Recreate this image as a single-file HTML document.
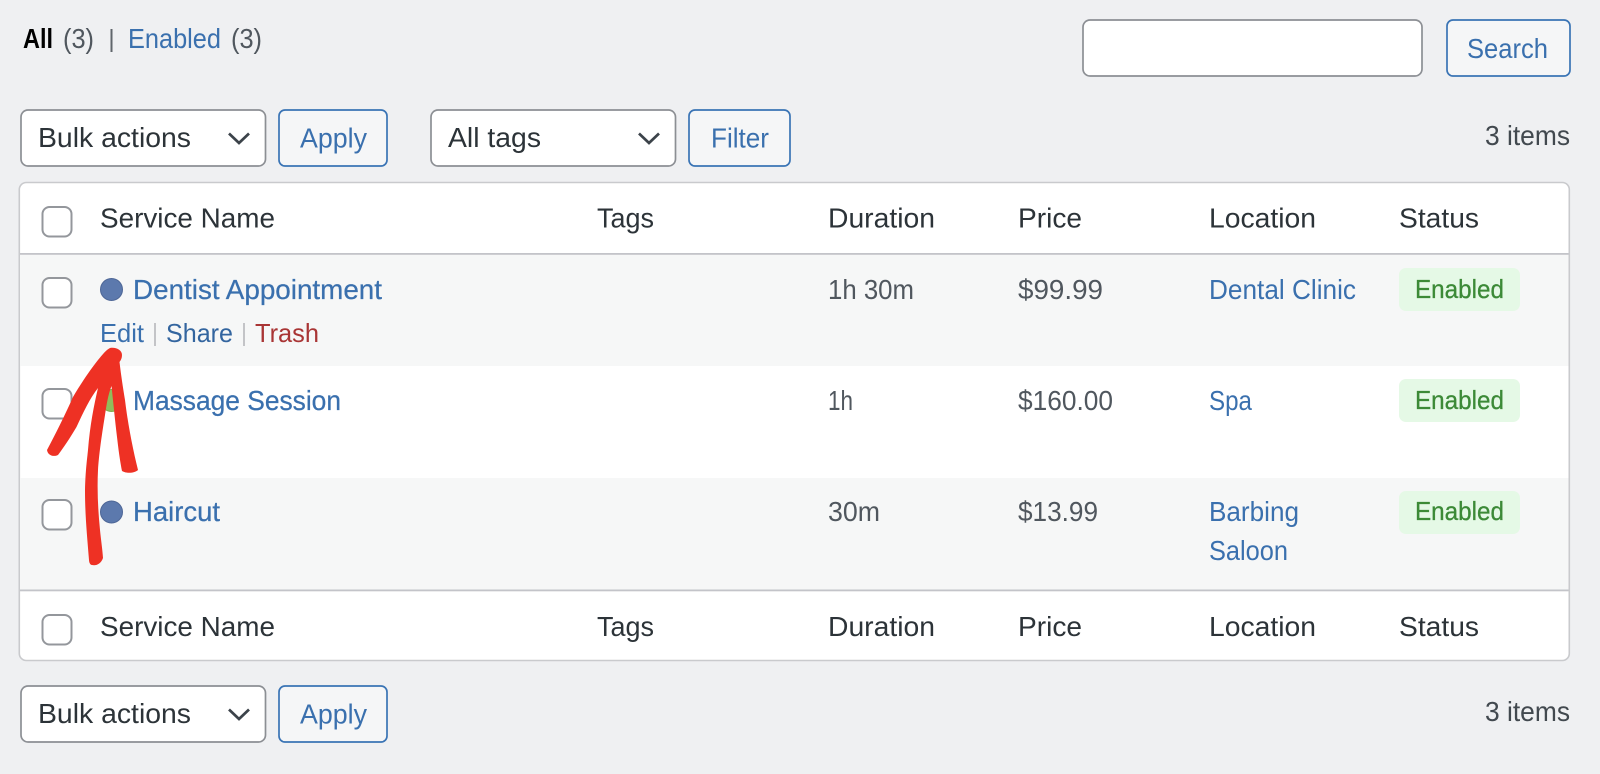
<!DOCTYPE html>
<html lang="en">
<head>
<meta charset="utf-8">
<title>Services</title>
<style>
html,body{margin:0;padding:0;background:#eff0f2;width:1600px;height:774px;overflow:hidden}
svg{display:block;filter:blur(.3px)}
text{font-family:"Liberation Sans",sans-serif;font-size:28px;fill:#2c3338}
.d{fill:#50575e}
.l{fill:#3a70ae}
.m{stroke:#3a70ae;stroke-width:.25}
.b{fill:#3a70ae}
.g{fill:#3c8a37;stroke:#3c8a37;stroke-width:.3;font-size:26px}
.cb{fill:#fff;stroke:#94979c;stroke-width:2}
.sel{fill:#fff;stroke:#8c8f94;stroke-width:1.7}
.btn{fill:#f5f6f7;stroke:#3a74b5;stroke-width:1.7}
.chev{fill:none;stroke:#3c434a;stroke-width:2.7}
.badge{fill:#e5f9e6}
</style>
</head>
<body>
<svg width="1600" height="774" viewBox="0 0 1600 774" xmlns="http://www.w3.org/2000/svg">
<rect x="-5" y="-5" width="1610" height="784" fill="#eff0f2"/>

<!-- views -->
<text x="23" y="48" textLength="30" lengthAdjust="spacingAndGlyphs" font-weight="700" style="fill:#000">All</text>
<text x="63" y="48" textLength="31" lengthAdjust="spacingAndGlyphs" class="d">(3)</text>
<rect x="110.5" y="29" width="2" height="23" fill="#60666c"/>
<text x="128" y="48" textLength="93" lengthAdjust="spacingAndGlyphs" class="l">Enabled</text>
<text x="231" y="48" textLength="31" lengthAdjust="spacingAndGlyphs" class="d">(3)</text>

<!-- search -->
<rect x="1083" y="20" width="339" height="56" rx="7" class="sel"/>
<rect x="1447" y="20" width="123" height="56" rx="6" class="btn"/>
<text x="1467" y="58" textLength="81" lengthAdjust="spacingAndGlyphs" class="b">Search</text>

<!-- top tablenav -->
<rect x="21" y="110" width="244.500" height="56" rx="7" class="sel"/>
<text x="38" y="147" textLength="153" lengthAdjust="spacingAndGlyphs">Bulk actions</text>
<path d="M229 133.500l10 9.500 10-9.500" class="chev"/>
<rect x="279" y="110" width="108" height="56" rx="6" class="btn"/>
<text x="300" y="147.500" textLength="67" lengthAdjust="spacingAndGlyphs" class="b">Apply</text>
<rect x="431" y="110" width="244.500" height="56" rx="7" class="sel"/>
<text x="448" y="147" textLength="93" lengthAdjust="spacingAndGlyphs">All tags</text>
<path d="M639 133.500l10 9.500 10-9.500" class="chev"/>
<rect x="689" y="110" width="101" height="56" rx="6" class="btn"/>
<text x="711" y="147.500" textLength="58" lengthAdjust="spacingAndGlyphs" class="b">Filter</text>
<text x="1485" y="145" textLength="85" lengthAdjust="spacingAndGlyphs" class="d" style="fill:#42494f">3 items</text>

<!-- table -->
<rect x="19.300" y="182.500" width="1550" height="478" rx="7" fill="#fff" stroke="#c9cacd" stroke-width="1.600"/>
<rect x="20" y="254" width="1548.500" height="112" fill="#f6f7f7"/>
<rect x="20" y="478" width="1548.500" height="112" fill="#f6f7f7"/>
<rect x="20" y="253" width="1548.500" height="1.800" fill="#c3c4c9"/>
<rect x="20" y="589.500" width="1548.500" height="1.800" fill="#c3c4c9"/>

<!-- header -->
<rect x="42.500" y="207" width="29" height="29.500" rx="7" class="cb"/>
<text x="100" y="227.500" textLength="175" lengthAdjust="spacingAndGlyphs">Service Name</text>
<text x="597" y="227.500" textLength="57" lengthAdjust="spacingAndGlyphs">Tags</text>
<text x="828" y="227.500" textLength="107" lengthAdjust="spacingAndGlyphs">Duration</text>
<text x="1018" y="227.500" textLength="64" lengthAdjust="spacingAndGlyphs">Price</text>
<text x="1209" y="227.500" textLength="107" lengthAdjust="spacingAndGlyphs">Location</text>
<text x="1399" y="227.500" textLength="80" lengthAdjust="spacingAndGlyphs">Status</text>

<!-- row 1 -->
<rect x="42.500" y="278" width="29" height="29.500" rx="7" class="cb"/>
<circle cx="111.500" cy="289.500" r="11" fill="#5c79ad" stroke="#4e6797" stroke-width="1"/>
<text x="133" y="299" textLength="249" lengthAdjust="spacingAndGlyphs" class="l m">Dentist Appointment</text>
<text x="100" y="342" textLength="44" lengthAdjust="spacingAndGlyphs" class="l" style="font-size:26px">Edit</text>
<rect x="154" y="323" width="2" height="23" fill="#c3c4c7"/>
<text x="166" y="342" textLength="67" lengthAdjust="spacingAndGlyphs" style="font-size:26px;fill:#33659f">Share</text>
<rect x="243" y="323" width="2" height="23" fill="#c3c4c7"/>
<text x="255" y="342" textLength="64" lengthAdjust="spacingAndGlyphs" style="font-size:26px;fill:#a93535">Trash</text>
<text x="828" y="299" textLength="86" lengthAdjust="spacingAndGlyphs" class="d">1h 30m</text>
<text x="1018" y="299" textLength="85" lengthAdjust="spacingAndGlyphs" class="d">$99.99</text>
<text x="1209" y="299" textLength="147" lengthAdjust="spacingAndGlyphs" class="l">Dental Clinic</text>
<rect x="1399" y="268" width="121" height="43" rx="7" class="badge"/>
<text x="1415" y="298" textLength="89" lengthAdjust="spacingAndGlyphs" class="g">Enabled</text>

<!-- row 2 -->
<rect x="42.500" y="389" width="29" height="29.500" rx="7" class="cb"/>
<circle cx="111.500" cy="400.500" r="11" fill="#90bd5c" stroke="#7fac4e" stroke-width="1"/>
<text x="133" y="410" textLength="208" lengthAdjust="spacingAndGlyphs" class="l m">Massage Session</text>
<text x="828" y="410" textLength="25" lengthAdjust="spacingAndGlyphs" class="d">1h</text>
<text x="1018" y="410" textLength="95" lengthAdjust="spacingAndGlyphs" class="d">$160.00</text>
<text x="1209" y="410" textLength="43" lengthAdjust="spacingAndGlyphs" class="l">Spa</text>
<rect x="1399" y="379" width="121" height="43" rx="7" class="badge"/>
<text x="1415" y="409" textLength="89" lengthAdjust="spacingAndGlyphs" class="g">Enabled</text>

<!-- row 3 -->
<rect x="42.500" y="500" width="29" height="29.500" rx="7" class="cb"/>
<circle cx="111.500" cy="512" r="11" fill="#5c79ad" stroke="#4e6797" stroke-width="1"/>
<text x="133" y="521" textLength="87" lengthAdjust="spacingAndGlyphs" class="l m">Haircut</text>
<text x="828" y="521" textLength="52" lengthAdjust="spacingAndGlyphs" class="d">30m</text>
<text x="1018" y="521" textLength="80" lengthAdjust="spacingAndGlyphs" class="d">$13.99</text>
<text x="1209" y="521" textLength="90" lengthAdjust="spacingAndGlyphs" class="l">Barbing</text>
<text x="1209" y="560" textLength="79" lengthAdjust="spacingAndGlyphs" class="l">Saloon</text>
<rect x="1399" y="491" width="121" height="43" rx="7" class="badge"/>
<text x="1415" y="520" textLength="89" lengthAdjust="spacingAndGlyphs" class="g">Enabled</text>

<!-- footer -->
<rect x="42.500" y="615" width="29" height="29.500" rx="7" class="cb"/>
<text x="100" y="636" textLength="175" lengthAdjust="spacingAndGlyphs">Service Name</text>
<text x="597" y="636" textLength="57" lengthAdjust="spacingAndGlyphs">Tags</text>
<text x="828" y="636" textLength="107" lengthAdjust="spacingAndGlyphs">Duration</text>
<text x="1018" y="636" textLength="64" lengthAdjust="spacingAndGlyphs">Price</text>
<text x="1209" y="636" textLength="107" lengthAdjust="spacingAndGlyphs">Location</text>
<text x="1399" y="636" textLength="80" lengthAdjust="spacingAndGlyphs">Status</text>

<!-- bottom tablenav -->
<rect x="21" y="686" width="244.500" height="56" rx="7" class="sel"/>
<text x="38" y="723" textLength="153" lengthAdjust="spacingAndGlyphs">Bulk actions</text>
<path d="M229 709.500l10 9.500 10-9.500" class="chev"/>
<rect x="279" y="686" width="108" height="56" rx="6" class="btn"/>
<text x="300" y="723.500" textLength="67" lengthAdjust="spacingAndGlyphs" class="b">Apply</text>
<text x="1485" y="721" textLength="85" lengthAdjust="spacingAndGlyphs" class="d" style="fill:#42494f">3 items</text>

<!-- red arrow -->
<path fill="#ee3124" d="M110 348C116 347 122 350 122 355C122 358 121 360 119.500 362C121 375 123 388 125 400C128 425 133 450 138 470C135 473 127 474 122 471C119 455 118 445 117 437C115 420 113 400 111.500 386C108 395 106.500 405 105 415C101 440 99 455 98 470C97 490 98 510 100 530C101 540 102.500 550 103 558C101 564 96 566 92 565C90 565 89 562 89 560C87 535 85 515 85 490C85.500 470 87 460 88 450C90 425 94 405 98 388C90 398 83 413 76.500 427C70 438 64 447 58 455C54 457 48 456 47 450C55 435 65 415 73 397C80 385 90 370 98 360C103 354 106 350 110 348Z"/>
</svg>
</body>
</html>
